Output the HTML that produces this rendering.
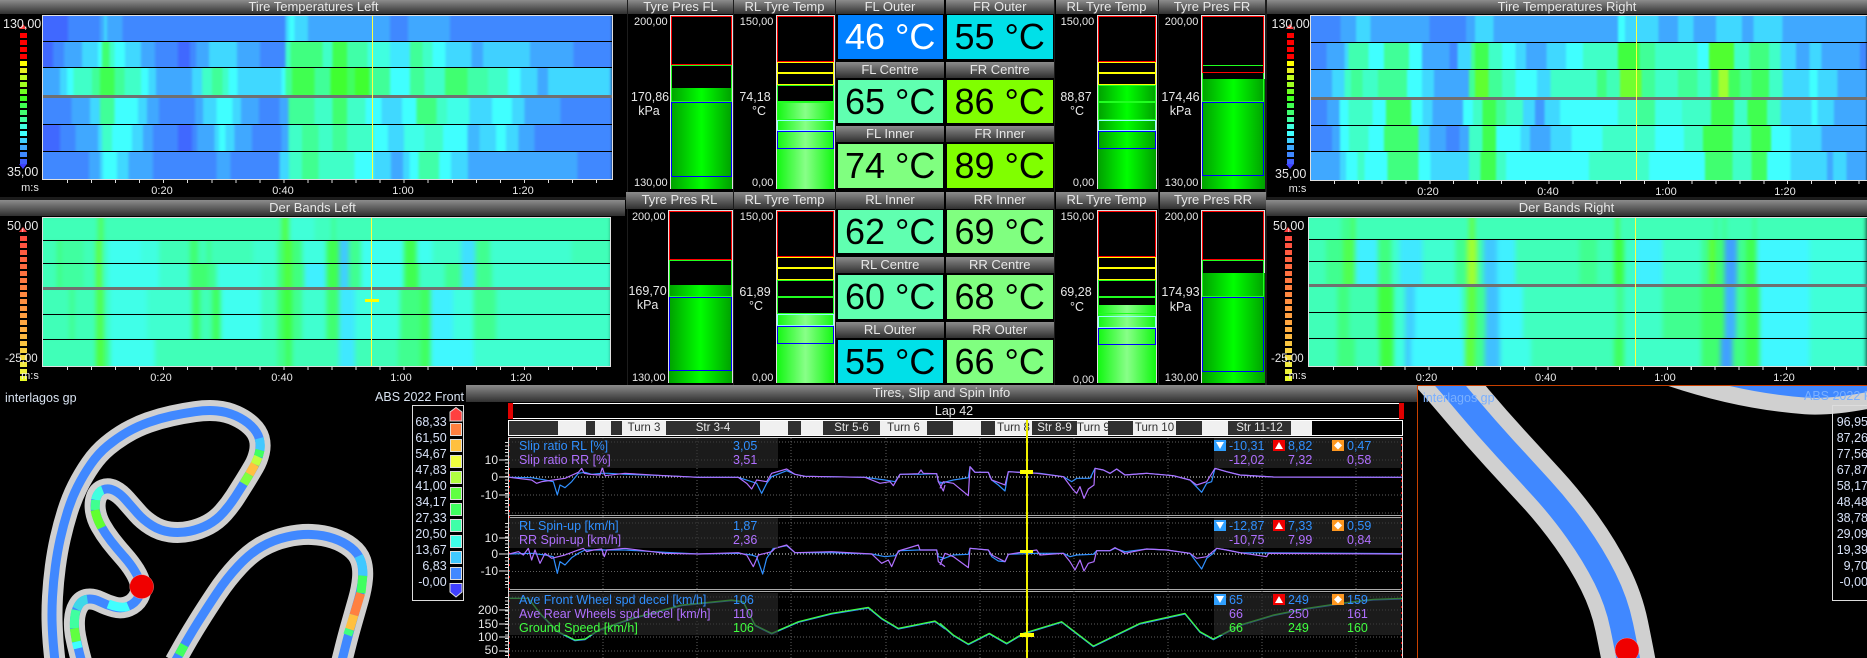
<!DOCTYPE html>
<html><head><meta charset="utf-8"><title>Telemetry</title>
<style>
html,body{margin:0;padding:0;background:#000;width:1867px;height:658px;overflow:hidden}
body{position:relative;font-family:"Liberation Sans",sans-serif;color:#e8e8e8;font-size:12.5px}
div,span{position:absolute;box-sizing:border-box;white-space:nowrap}
.tb{background:linear-gradient(180deg,#8c8c8c,#303030);text-align:center;color:#e8e8e8;font-size:13px;line-height:14px}
.v{font-size:36px;line-height:44px;text-align:center;color:#000;letter-spacing:0}
.r{width:60px;text-align:right;line-height:16px;font-size:11px}
.c{width:80px;text-align:center;line-height:16px}
.x{width:40px;text-align:center;line-height:16px;font-size:11px}
.p{background:linear-gradient(90deg,#00a000,#00ff00 50%,#00a000)}
.q{background:linear-gradient(90deg,#12f812,#88ff88 50%,#12f812)}
.gf{border:1px solid #e0e0e0;background:#000}
.bo{border:1px solid #ff0000}.bg{border:1px solid #20ff20}.by{border:1px solid #ffff00}.bc{border:1px solid #90ffff}.bb{border:1px solid #0000ff}
.hl{left:0;top:-12px;height:calc(100% + 24px);width:1500px;transform:scaleX(.40816);transform-origin:0 0;filter:blur(3px)}
.hr{left:0;top:-12px;height:calc(100% + 24px);width:1568px;transform:scaleX(.3871);transform-origin:0 0;filter:blur(3px)}
.d .hl,.d .hr{filter:blur(6px)}
.w{overflow:hidden}
.sep{background:#000;height:1px}
.s1{background:repeating-linear-gradient(180deg,#0000 0 5px,#000 5px 7px),linear-gradient(180deg,#ff0000 0 28px,#ffff00 0 35px,#e8f020 0 42px,#c0ff20 0 49px,#a0ff20 0 56px,#70ff20 0 63px,#40ff20 0 70px,#40ff50 0 77px,#40ff70 0 84px,#40ffa0 0 91px,#40ffe0 0 98px,#40ffff 0 105px,#40d0ff 0 112px,#40a8ff 0 119px,#4088ff 0 126px,#4060ff 0 133px);width:6.5px;height:131px}
.s2{background:repeating-linear-gradient(180deg,#0000 0 5px,#000 5px 7px),linear-gradient(180deg,#ff4a40,#ff8040 35%,#ffb040 65%,#f0f040 90%,#e8ff20);width:6.5px;height:147px}
.tk{height:3px;background:repeating-linear-gradient(90deg,#ddd 0 1px,#0000 1px 24.05px)}
.ya{background:repeating-linear-gradient(180deg,#ddd 0 1px,#0000 1px 3.4px);width:3px;left:505px}
.ip{background:rgba(44,44,44,.62)}
.sb{top:421px;height:14px;text-align:center;line-height:14px;font-size:11.5px;overflow:hidden}
.dk{background:#303030;color:#e8e8e8}.lt{background:#f0f0f0;color:#303030}
.bl{color:#3090ff}.pu{color:#b070ff}.gr{color:#40ff40}
.i{width:12px;height:11px;line-height:16px}
.lg{width:40px;text-align:right;color:#d8e2f8;line-height:16px;font-size:12.5px}
.sw{left:449.7px;width:12px;height:13px;border:1px solid #ddd}
</style></head><body>

<!-- background separators -->
<div style="left:627px;top:0;width:1px;height:385px;background:#1c1c1c"></div>
<div style="left:733px;top:0;width:1px;height:385px;background:#1c1c1c"></div>
<div style="left:835px;top:0;width:1px;height:385px;background:#1c1c1c"></div>
<div style="left:1054px;top:0;width:1px;height:385px;background:#1c1c1c"></div>
<div style="left:1158px;top:0;width:1px;height:385px;background:#1c1c1c"></div>
<div style="left:1265px;top:0;width:2px;height:385px;background:#1c1c1c"></div>
<div style="left:0;top:197px;width:627px;height:3px;background:#1c1c1c"></div>
<div style="left:1267px;top:197px;width:600px;height:3px;background:#1c1c1c"></div>

<!-- LEFT TOP HEAT -->
<div class="tb" style="left:0;top:0;width:627px;height:14px">Tire Temperatures Left</div>
<div class="gf" style="left:42px;top:15px;width:571px;height:165px"></div>
<div class="a w" style="left:43px;top:16px;width:569px;height:163px">
<div class="w" style="left:0;top:0;width:569px;height:26px"><div class="hl" style="left:-43px;background:linear-gradient(90deg,#4068ff 0 166px,#4088ff 0 245px,#40a8ff 0 255px,#40d8ff 0 262px,#40a8ff 0 300px,#4088ff 0 700px,#40d8ff 0 708px,#40ffff 0 722px,#40d8ff 0 755px,#40a8ff 0 955px,#4088ff 0 1000px,#40a8ff 0 1102px,#4088ff 0 1500px)"></div></div>
<div class="w" style="left:0;top:26px;width:569px;height:26px"><div class="hl" style="left:-43px;background:linear-gradient(90deg,#4068ff 0 130px,#4088ff 0 157px,#40a8ff 0 201px,#40d8ff 0 240px,#40ffff 0 250px,#40ff70 0 268px,#40ffc8 0 280px,#40ffff 0 306px,#40d8ff 0 346px,#40a8ff 0 380px,#4088ff 0 436px,#4068ff 0 465px,#4088ff 0 480px,#40a8ff 0 512px,#40d8ff 0 581px,#40a8ff 0 637px,#4088ff 0 700px,#40ffc8 0 712px,#40ff80 0 790px,#40ffc8 0 815px,#40ff50 0 850px,#40ffa8 0 900px,#40ffe0 0 955px,#40e8ff 0 1005px,#40ff98 0 1035px,#40ffc8 0 1060px,#40ffff 0 1092px,#40d8ff 0 1155px,#40a8ff 0 1183px,#40d0ff 0 1298px,#40a8ff 0 1405px,#4088ff 0 1500px)"></div></div>
<div class="w" style="left:0;top:52px;width:569px;height:28px"><div class="hl" style="left:-43px;background:linear-gradient(90deg,#40a8ff 0 147px,#40d8ff 0 164px,#40ffff 0 180px,#40ffc8 0 225px,#40ff98 0 245px,#40ff50 0 280px,#40ff98 0 305px,#40ffc8 0 345px,#40ffff 0 364px,#40d8ff 0 382px,#40a8ff 0 470px,#40d8ff 0 495px,#40ffc8 0 520px,#40ff98 0 545px,#40ffc8 0 560px,#40ffff 0 582px,#40d8ff 0 690px,#40ffff 0 700px,#40ff98 0 715px,#40ff50 0 770px,#40ff98 0 810px,#40ff30 0 850px,#40ff60 0 870px,#40ff30 0 905px,#40ff98 0 955px,#40ffff 0 1005px,#40ff98 0 1040px,#40ffc8 0 1090px,#40ff70 0 1145px,#40ffa8 0 1195px,#40ffc8 0 1245px,#40ffff 0 1275px,#40d8ff 0 1317px,#40a8ff 0 1343px,#40d8ff 0 1495px,#40a8ff 0 1500px)"></div></div>
<div class="w" style="left:0;top:81px;width:569px;height:27px"><div class="hl" style="left:-43px;background:linear-gradient(90deg,#4088ff 0 175px,#40a8ff 0 220px,#40d8ff 0 245px,#40ff98 0 280px,#40ffff 0 338px,#40d8ff 0 360px,#40a8ff 0 390px,#4088ff 0 478px,#40a8ff 0 497px,#40d8ff 0 530px,#40ffff 0 570px,#40d8ff 0 590px,#40a8ff 0 635px,#4088ff 0 685px,#40a8ff 0 707px,#40ff98 0 770px,#40ffc8 0 815px,#40ff70 0 850px,#40ffc8 0 895px,#40ffff 0 935px,#40d8ff 0 985px,#40ffff 0 1020px,#40ff80 0 1070px,#40ffc8 0 1095px,#40ffe8 0 1150px,#40d8ff 0 1205px,#40ffff 0 1255px,#40d8ff 0 1285px,#40a8ff 0 1373px,#4088ff 0 1500px)"></div></div>
<div class="w" style="left:0;top:109px;width:569px;height:27px"><div class="hl" style="left:-43px;background:linear-gradient(90deg,#4068ff 0 147px,#4088ff 0 185px,#40a8ff 0 240px,#40d8ff 0 250px,#40ffc8 0 275px,#40ffff 0 323px,#40d8ff 0 350px,#40a8ff 0 375px,#4088ff 0 436px,#4068ff 0 470px,#4088ff 0 483px,#40a8ff 0 525px,#40d8ff 0 537px,#40ffff 0 553px,#40d8ff 0 575px,#40a8ff 0 617px,#4088ff 0 690px,#40a8ff 0 707px,#40ffc8 0 740px,#40ff98 0 780px,#40ffc8 0 815px,#40ff98 0 850px,#40ffc8 0 915px,#40ffff 0 950px,#40d8ff 0 990px,#40ffe8 0 1040px,#40ffc8 0 1085px,#40ffff 0 1145px,#40b8ff 0 1175px,#40d8ff 0 1215px,#40ffff 0 1240px,#40d8ff 0 1270px,#40a8ff 0 1310px,#4088ff 0 1500px)"></div></div>
<div class="w" style="left:0;top:136px;width:569px;height:27px"><div class="hl" style="left:-43px;background:linear-gradient(90deg,#4088ff 0 218px,#40a8ff 0 245px,#40d8ff 0 252px,#40ffff 0 287px,#40d8ff 0 315px,#40a8ff 0 375px,#4088ff 0 530px,#40a8ff 0 565px,#4088ff 0 685px,#40d8ff 0 708px,#40ffc8 0 740px,#40ff90 0 780px,#40ffc8 0 868px,#40ffff 0 915px,#40d8ff 0 958px,#40a8ff 0 987px,#40d8ff 0 1003px,#40ffff 0 1025px,#40ffa8 0 1075px,#40ffff 0 1105px,#40d8ff 0 1147px,#40a8ff 0 1415px,#4088ff 0 1500px)"></div></div>
</div>
<div class="sep" style="left:43px;top:41px;width:569px"></div>
<div class="sep" style="left:43px;top:67px;width:569px"></div>
<div style="left:43px;top:95px;width:569px;height:3px;background:#707070"></div>
<div class="sep" style="left:43px;top:124px;width:569px"></div>
<div class="sep" style="left:43px;top:151px;width:569px"></div>
<div style="left:372px;top:16px;width:1px;height:163px;background:#ffff40"></div>
<div class="tk" style="left:67px;top:180px;width:545px"></div>
<span class="x" style="left:142px;top:183px">0:20</span><span class="x" style="left:263px;top:183px">0:40</span><span class="x" style="left:383px;top:183px">1:00</span><span class="x" style="left:503px;top:183px">1:20</span>
<span class="x" style="left:10px;top:180px">m:s</span>
<div class="s1" style="left:20px;top:33px"></div>
<svg style="position:absolute;left:18px;top:24px" width="10" height="5"><polygon points="5,0 9,5 1,5" fill="#ff4040"/></svg>
<svg style="position:absolute;left:18px;top:164px" width="10" height="5"><polygon points="1,0 9,0 5,5" fill="#4040ff"/></svg>
<span style="left:3px;top:16px;line-height:16px">130,00</span>
<span style="left:7px;top:164px;line-height:16px">35,00</span>

<!-- LEFT BOTTOM HEAT -->
<div class="tb" style="left:0;top:200px;width:625px;height:16px;line-height:15px">Der Bands Left</div>
<div class="gf" style="left:42px;top:217px;width:569px;height:150px"></div>
<div class="a w d" style="left:43px;top:218px;width:567px;height:148px">
<div class="w" style="left:0;top:0;width:567px;height:22px"><div class="hl" style="left:-43px;background:linear-gradient(90deg,#40ffb8 0 238px,#40ff90 0 244px,#60ff40 0 250px,#40ff90 0 256px,#40ffb8 0 690px,#50ff50 0 708px,#40ffd8 0 770px,#40ffc0 0 815px,#40ff70 0 819px,#40ffb8 0 1500px)"></div></div>
<div class="w" style="left:0;top:22px;width:567px;height:23px"><div class="hl" style="left:-43px;background:linear-gradient(90deg,#40ffb8 0 140px,#40ff80 0 150px,#40ffa0 0 205px,#40ffb8 0 235px,#60ff40 0 250px,#40ffc8 0 265px,#40fff0 0 345px,#40ffe0 0 390px,#40ffb8 0 465px,#40ff70 0 485px,#40ffb8 0 508px,#40ff80 0 516px,#40ffb8 0 620px,#40ffd0 0 680px,#40ff80 0 695px,#50ff40 0 715px,#40ff80 0 740px,#40ffe0 0 800px,#40ff50 0 830px,#40c8ff 0 855px,#40ff90 0 885px,#40fff0 0 990px,#40ff50 0 1020px,#40fff0 0 1060px,#40ffc8 0 1130px,#40e0ff 0 1165px,#40ff90 0 1200px,#40ffd0 0 1400px,#40ffb8 0 1500px)"></div></div>
<div class="w" style="left:0;top:45px;width:567px;height:25px"><div class="hl" style="left:-43px;background:linear-gradient(90deg,#40ffb8 0 140px,#40ff80 0 150px,#40ffa0 0 205px,#40ffb8 0 235px,#60ff40 0 250px,#40ffc8 0 265px,#40fff0 0 390px,#40ffd0 0 465px,#40ff70 0 510px,#40ff90 0 530px,#40ffe8 0 640px,#40ffd0 0 680px,#40ff80 0 695px,#50ff40 0 715px,#40ff80 0 745px,#40f0ff 0 800px,#40ff50 0 830px,#40d0ff 0 855px,#40ff90 0 885px,#40fff0 0 990px,#40ff50 0 1025px,#40ffc8 0 1090px,#40ff90 0 1130px,#40e0ff 0 1165px,#40ff90 0 1205px,#40ffd0 0 1500px)"></div></div>
<div class="w" style="left:0;top:70px;width:567px;height:26px"><div class="hl" style="left:-43px;background:linear-gradient(90deg,#40ffb8 0 170px,#40ff90 0 182px,#40ffb8 0 235px,#50ff50 0 255px,#40ffc8 0 270px,#40ffe8 0 360px,#40ffd0 0 470px,#40ff60 0 490px,#40ffb8 0 520px,#40ff60 0 540px,#40fff0 0 640px,#40ffc0 0 680px,#40ff70 0 695px,#40ff40 0 715px,#40ff90 0 740px,#40ffd0 0 800px,#40ff70 0 830px,#40e8ff 0 870px,#40ffe0 0 980px,#40ff80 0 1030px,#40ff60 0 1055px,#40f0ff 0 1110px,#40ffe0 0 1160px,#40ff90 0 1215px,#40ffc8 0 1500px)"></div></div>
<div class="w" style="left:0;top:96px;width:567px;height:25px"><div class="hl" style="left:-43px;background:linear-gradient(90deg,#40ffb8 0 170px,#40ff90 0 182px,#40ffb8 0 235px,#50ff50 0 255px,#40ffc8 0 270px,#40ffe8 0 360px,#40ffd0 0 470px,#40ff60 0 490px,#40ffb8 0 520px,#40ff60 0 540px,#40fff0 0 640px,#40ffc0 0 680px,#40ff70 0 695px,#40ff40 0 715px,#40ff90 0 740px,#40ffd0 0 800px,#40ff70 0 830px,#40e8ff 0 870px,#40ffe0 0 980px,#40ff80 0 1030px,#40ff60 0 1055px,#40f0ff 0 1110px,#40ffe0 0 1160px,#40ff90 0 1215px,#40ffc8 0 1500px)"></div></div>
<div class="w" style="left:0;top:121px;width:567px;height:27px"><div class="hl" style="left:-43px;background:linear-gradient(90deg,#40ffb8 0 235px,#50ff40 0 255px,#40ff90 0 270px,#40fff0 0 380px,#40ffb8 0 680px,#40ff90 0 700px,#40ff60 0 715px,#40ffb8 0 830px,#40e8ff 0 870px,#40ffb8 0 975px,#40ff90 0 1030px,#40ff60 0 1055px,#40f8ff 0 1160px,#40ffd0 0 1500px)"></div></div>
</div>
<div class="sep" style="left:43px;top:240px;width:567px"></div>
<div class="sep" style="left:43px;top:263px;width:567px"></div>
<div style="left:43px;top:287px;width:567px;height:3px;background:#707070"></div>
<div class="sep" style="left:43px;top:314px;width:567px"></div>
<div class="sep" style="left:43px;top:339px;width:567px"></div>
<div style="left:371px;top:218px;width:1px;height:148px;background:#ffff40"></div>
<div style="left:364.5px;top:299px;width:14px;height:3px;background:#ffff00"></div>
<div class="tk" style="left:66.5px;top:367px;width:543px"></div>
<span class="x" style="left:141px;top:370px">0:20</span><span class="x" style="left:262px;top:370px">0:40</span><span class="x" style="left:381px;top:370px">1:00</span><span class="x" style="left:501px;top:370px">1:20</span>
<div class="s2" style="left:20px;top:235.5px"></div>
<svg style="position:absolute;left:18px;top:227px" width="10" height="5"><polygon points="5,0 9,5 1,5" fill="#ff4040"/></svg>
<span style="left:7px;top:218px;line-height:16px">50,00</span>
<span style="left:5px;top:351px;line-height:16px;font-size:11.5px">-25,00</span>
<span class="x" style="left:10px;top:368px">m:s</span>

<!-- RIGHT TOP HEAT -->
<div class="tb" style="left:1267px;top:0;width:600px;height:14px">Tire Temperatures Right</div>
<div class="gf" style="left:1310px;top:15px;width:570px;height:166px"></div>
<div class="a w" style="left:1311px;top:16px;width:556px;height:164px">
<div class="w" style="left:0;top:0;width:556px;height:26px"><div class="hr" style="left:-51px;background:linear-gradient(90deg,#4088ff 0 208px,#40a8ff 0 248px,#40d8ff 0 285px,#40a8ff 0 438px,#4088ff 0 532px,#40a8ff 0 555px,#40d8ff 0 603px,#40a8ff 0 925px,#40ffff 0 943px,#40d8ff 0 1030px,#40a8ff 0 1080px,#40d8ff 0 1120px,#40a8ff 0 1178px,#40d8ff 0 1245px,#40a8ff 0 1275px,#40d8ff 0 1350px,#40a8ff 0 1568px)"></div></div>
<div class="w" style="left:0;top:26px;width:556px;height:27px"><div class="hr" style="left:-51px;background:linear-gradient(90deg,#4088ff 0 172px,#40a8ff 0 218px,#40d8ff 0 228px,#40ffb0 0 280px,#40ffff 0 320px,#40ff98 0 385px,#40ffff 0 418px,#40a8ff 0 490px,#4088ff 0 510px,#40d8ff 0 545px,#40ff98 0 555px,#40ff50 0 590px,#40ffc8 0 625px,#40ffff 0 660px,#40d8ff 0 687px,#40a8ff 0 740px,#40d8ff 0 790px,#40ffff 0 835px,#40ffc8 0 925px,#40ff40 0 980px,#40ff98 0 1020px,#40ffc8 0 1130px,#40ffff 0 1160px,#50ff30 0 1225px,#40ffc8 0 1265px,#40ff80 0 1315px,#40ffc8 0 1345px,#40d8ff 0 1385px,#40a8ff 0 1420px,#40d8ff 0 1450px,#40a8ff 0 1550px,#4088ff 0 1568px)"></div></div>
<div class="w" style="left:0;top:53px;width:556px;height:28px"><div class="hr" style="left:-51px;background:linear-gradient(90deg,#40a8ff 0 186px,#40d8ff 0 218px,#40ffc8 0 235px,#40ff98 0 265px,#40ffc8 0 305px,#40ff98 0 380px,#40ffff 0 418px,#40d8ff 0 450px,#40a8ff 0 540px,#40ff98 0 555px,#60ff30 0 590px,#40ff98 0 625px,#40ffc8 0 660px,#40ffff 0 715px,#40d8ff 0 750px,#40ffc8 0 870px,#40ff80 0 895px,#40ffb8 0 930px,#70ff30 0 985px,#40ff98 0 1020px,#40ffc8 0 1080px,#40ff98 0 1130px,#40ffc8 0 1165px,#40ff60 0 1185px,#a0ff30 0 1210px,#40ff60 0 1240px,#40ff98 0 1270px,#40ff60 0 1315px,#40ffc8 0 1350px,#40d8ff 0 1420px,#40ffff 0 1440px,#40d8ff 0 1492px,#40a8ff 0 1568px)"></div></div>
<div class="w" style="left:0;top:82px;width:556px;height:27px"><div class="hr" style="left:-51px;background:linear-gradient(90deg,#4088ff 0 173px,#40a8ff 0 205px,#40ffff 0 228px,#40ffc8 0 290px,#40ffff 0 325px,#40ff60 0 390px,#40ffff 0 420px,#40d8ff 0 445px,#40a8ff 0 525px,#40ffff 0 550px,#40ffc8 0 575px,#40ff50 0 610px,#40ff98 0 635px,#40ffc8 0 680px,#40d8ff 0 710px,#4098ff 0 735px,#40d8ff 0 775px,#40ffff 0 925px,#40ffc8 0 975px,#40ff98 0 1020px,#40ffe8 0 1090px,#40ffc8 0 1165px,#40ff50 0 1225px,#40ffc8 0 1260px,#40ff50 0 1310px,#40ffc8 0 1345px,#40d8ff 0 1425px,#40ffff 0 1440px,#40d8ff 0 1483px,#40a8ff 0 1568px)"></div></div>
<div class="w" style="left:0;top:109px;width:556px;height:26px"><div class="hr" style="left:-51px;background:linear-gradient(90deg,#4088ff 0 186px,#40a8ff 0 207px,#40ffff 0 230px,#40ffc8 0 280px,#40ffff 0 320px,#40ff70 0 410px,#40d8ff 0 438px,#40a8ff 0 480px,#4088ff 0 515px,#40a8ff 0 540px,#40ffc8 0 575px,#40ff50 0 610px,#40ffff 0 673px,#40d8ff 0 697px,#40a8ff 0 750px,#40d8ff 0 805px,#40ffff 0 885px,#40ffc8 0 1020px,#40ffff 0 1095px,#40ffc8 0 1145px,#40ff50 0 1220px,#40ffc8 0 1268px,#40ff50 0 1320px,#40ffff 0 1370px,#40d8ff 0 1450px,#40a8ff 0 1568px)"></div></div>
<div class="w" style="left:0;top:135px;width:556px;height:29px"><div class="hr" style="left:-51px;background:linear-gradient(90deg,#40a8ff 0 207px,#40d8ff 0 222px,#40ffff 0 252px,#40ffc8 0 270px,#40ffff 0 330px,#40ff80 0 410px,#40ffff 0 440px,#40d8ff 0 540px,#40ffc8 0 570px,#40ff50 0 610px,#40ffc8 0 635px,#40ffff 0 850px,#40ffc8 0 1005px,#40ffff 0 1150px,#40ff70 0 1220px,#40ffc8 0 1270px,#40ff60 0 1310px,#40ffff 0 1370px,#40d8ff 0 1465px,#40a8ff 0 1480px,#40d8ff 0 1515px,#40a8ff 0 1568px)"></div></div>
</div>
<div class="sep" style="left:1311px;top:42px;width:556px"></div>
<div class="sep" style="left:1311px;top:69px;width:556px"></div>
<div style="left:1311px;top:97px;width:556px;height:3px;background:#707070"></div>
<div class="sep" style="left:1311px;top:125px;width:556px"></div>
<div class="sep" style="left:1311px;top:151px;width:556px"></div>
<div style="left:1636px;top:16px;width:1px;height:164px;background:#ffff40"></div>
<div class="tk" style="left:1334px;top:181px;width:533px;background:repeating-linear-gradient(90deg,#ddd 0 1px,#0000 1px 23.85px)"></div>
<span class="x" style="left:1408px;top:184px">0:20</span><span class="x" style="left:1528px;top:184px">0:40</span><span class="x" style="left:1646px;top:184px">1:00</span><span class="x" style="left:1765px;top:184px">1:20</span>
<span class="x" style="left:1277.5px;top:181px">m:s</span>
<div class="s1" style="left:1287px;top:33px"></div>
<svg style="position:absolute;left:1285px;top:24px" width="10" height="5"><polygon points="5,0 9,5 1,5" fill="#ff4040"/></svg>
<svg style="position:absolute;left:1285px;top:164px" width="10" height="5"><polygon points="1,0 9,0 5,5" fill="#4040ff"/></svg>
<span style="left:1271.5px;top:16px;line-height:16px">130,00</span>
<span style="left:1275px;top:166px;line-height:16px">35,00</span>

<!-- RIGHT BOTTOM HEAT -->
<div class="tb" style="left:1266px;top:200px;width:601px;height:16px;line-height:15px">Der Bands Right</div>
<div class="gf" style="left:1308px;top:217px;width:570px;height:150px"></div>
<div class="a w d" style="left:1309px;top:218px;width:558px;height:148px">
<div class="w" style="left:0;top:0;width:558px;height:21px"><div class="hr" style="left:-49px;background:linear-gradient(90deg,#40ffb8 0 210px,#40ff90 0 238px,#50ff50 0 245px,#40ffb8 0 540px,#60ff50 0 556px,#40ffb8 0 920px,#50ff40 0 928px,#40ffb8 0 1175px,#40ff80 0 1180px,#40ffb8 0 1195px,#40ff90 0 1205px,#40ffb8 0 1275px,#40ff70 0 1280px,#40ffb8 0 1568px)"></div></div>
<div class="w" style="left:0;top:21px;width:558px;height:47px"><div class="hr" style="left:-49px;background:linear-gradient(90deg,#40ffb8 0 170px,#40ff90 0 215px,#50ff50 0 245px,#40f0ff 0 305px,#40ff80 0 340px,#40ffd0 0 360px,#40e8ff 0 420px,#40ffd0 0 505px,#40ff90 0 535px,#a0ff30 0 560px,#40ffb0 0 578px,#40c8ff 0 612px,#40f0ff 0 660px,#40ffb8 0 825px,#40ff90 0 870px,#40ffb8 0 915px,#40ff40 0 940px,#40ffc8 0 970px,#40f0ff 0 1040px,#40ffc8 0 1140px,#40ff90 0 1160px,#60ff30 0 1175px,#40ff70 0 1200px,#40a0ff 0 1232px,#40ff90 0 1255px,#40ff50 0 1282px,#40f8ff 0 1420px,#40ffe0 0 1568px)"></div></div>
<div class="w" style="left:0;top:68px;width:558px;height:52px"><div class="hr" style="left:-49px;background:linear-gradient(90deg,#40ffb8 0 200px,#40ff80 0 230px,#40ffb0 0 305px,#40ff40 0 345px,#40ffd0 0 375px,#40d0ff 0 400px,#40f8ff 0 520px,#40ffb8 0 535px,#60ff40 0 558px,#40ff90 0 582px,#40c0ff 0 618px,#40f8ff 0 680px,#40ffc0 0 920px,#40ff90 0 940px,#40ffc8 0 1040px,#40ff90 0 1140px,#40ff60 0 1200px,#40b0ff 0 1230px,#40ff90 0 1255px,#40ff50 0 1290px,#40f8ff 0 1420px,#40ffd8 0 1568px)"></div></div>
<div class="w" style="left:0;top:120px;width:558px;height:28px"><div class="hr" style="left:-49px;background:linear-gradient(90deg,#40ffb8 0 200px,#40ff80 0 245px,#40ffb8 0 310px,#40ff40 0 345px,#40ffe0 0 375px,#40c8ff 0 390px,#40f8ff 0 530px,#60ff40 0 555px,#40ff90 0 580px,#40c0ff 0 620px,#40ffe8 0 700px,#40ffb8 0 915px,#40ff60 0 940px,#40ffc8 0 1140px,#40ff70 0 1190px,#40a0ff 0 1220px,#40ff80 0 1255px,#40ff50 0 1290px,#40f8ff 0 1420px,#40ffd0 0 1568px)"></div></div>
</div>
<div class="sep" style="left:1309px;top:239px;width:558px"></div>
<div class="sep" style="left:1309px;top:261px;width:558px"></div>
<div style="left:1309px;top:284px;width:558px;height:3px;background:#707070"></div>
<div class="sep" style="left:1309px;top:312px;width:558px"></div>
<div class="sep" style="left:1309px;top:338px;width:558px"></div>
<div style="left:1635px;top:218px;width:1px;height:148px;background:#ffff40"></div>
<div class="tk" style="left:1332.5px;top:367px;width:534px;background:repeating-linear-gradient(90deg,#ddd 0 1px,#0000 1px 23.85px)"></div>
<span class="x" style="left:1406.5px;top:370px">0:20</span><span class="x" style="left:1525.7px;top:370px">0:40</span><span class="x" style="left:1645px;top:370px">1:00</span><span class="x" style="left:1764px;top:370px">1:20</span>
<div class="s2" style="left:1285px;top:235.5px"></div>
<svg style="position:absolute;left:1283px;top:227px" width="10" height="5"><polygon points="5,0 9,5 1,5" fill="#ff4040"/></svg>
<span style="left:1273px;top:218px;line-height:16px">50,00</span>
<span style="left:1271px;top:351px;line-height:16px;font-size:11.5px">-25,00</span>
<span class="x" style="left:1277.5px;top:368px">m:s</span>

<!-- GAUGES TITLES TOP -->
<div class="tb" style="left:628px;top:0;width:105px;height:14px">Tyre Pres FL</div>
<div class="tb" style="left:734px;top:0;width:101px;height:14px">RL Tyre Temp</div>
<div class="tb" style="left:836px;top:0;width:108px;height:14px">FL Outer</div>
<div class="tb" style="left:945.5px;top:0;width:108.5px;height:14px">FR Outer</div>
<div class="tb" style="left:1055.5px;top:0;width:102px;height:14px">RL Tyre Temp</div>
<div class="tb" style="left:1159px;top:0;width:106px;height:14px">Tyre Pres FR</div>

<!-- gauge FL pres -->
<div class="gf" style="left:670px;top:15px;width:63px;height:174px"></div>
<div class="p" style="left:671px;top:88px;width:61px;height:101px"></div>
<div class="bo" style="left:671px;top:16px;width:61px;height:49px"></div>
<div class="bg" style="left:671px;top:65px;width:61px;height:37px"></div>
<div class="bb" style="left:671px;top:102px;width:61px;height:74.5px"></div>
<!-- gauge FL temp -->
<div class="gf" style="left:776px;top:15px;width:58.5px;height:174px"></div>
<div class="q" style="left:777px;top:102px;width:57px;height:87px"></div>
<div class="bo" style="left:777px;top:16px;width:57px;height:46px"></div>
<div class="by" style="left:777px;top:62px;width:57px;height:11px"></div>
<div class="by" style="left:777px;top:73px;width:57px;height:12px"></div>
<div class="bg" style="left:777px;top:85px;width:57px;height:17px"></div>
<div class="bg" style="left:777px;top:102px;width:57px;height:18px"></div>
<div class="bc" style="left:777px;top:120px;width:57px;height:11px"></div>
<div class="bb" style="left:777px;top:131px;width:57px;height:17.5px"></div>
<!-- gauge FR temp -->
<div class="gf" style="left:1097px;top:15px;width:60px;height:174px"></div>
<div class="p" style="left:1098px;top:85px;width:58px;height:104px"></div>
<div class="bo" style="left:1098px;top:16px;width:58px;height:46px"></div>
<div class="by" style="left:1098px;top:62px;width:58px;height:11px"></div>
<div class="by" style="left:1098px;top:73px;width:58px;height:12px"></div>
<div class="bg" style="left:1098px;top:85px;width:58px;height:17px"></div>
<div class="bg" style="left:1098px;top:102px;width:58px;height:18px"></div>
<div class="bc" style="left:1098px;top:120px;width:58px;height:11px"></div>
<div class="bb" style="left:1098px;top:131px;width:58px;height:17.5px"></div>
<!-- gauge FR pres -->
<div class="gf" style="left:1201px;top:15px;width:64px;height:174px"></div>
<div class="p" style="left:1202px;top:79px;width:63px;height:110px"></div>
<div class="bg" style="left:1202px;top:65px;width:62px;height:37px"></div>
<div class="bo" style="left:1202px;top:16px;width:62px;height:56.5px"></div>
<div class="bb" style="left:1202px;top:102px;width:62px;height:74px"></div>

<span class="r" style="left:607.7px;top:14px">200,00</span><span class="c" style="left:610px;top:89px">170,86</span><span class="c" style="left:609px;top:103px">kPa</span><span class="r" style="left:607.7px;top:175px">130,00</span>
<span class="r" style="left:713.4px;top:14px">150,00</span><span class="c" style="left:715px;top:89px">74,18</span><span class="c" style="left:719px;top:103px">°C</span><span class="r" style="left:713.4px;top:175px">0,00</span>
<span class="r" style="left:1034.3px;top:14px">150,00</span><span class="c" style="left:1036px;top:89px">88,87</span><span class="c" style="left:1037px;top:103px">°C</span><span class="r" style="left:1034.3px;top:175px">0,00</span>
<span class="r" style="left:1138.4px;top:14px">200,00</span><span class="c" style="left:1140.5px;top:89px">174,46</span><span class="c" style="left:1140.5px;top:103px">kPa</span><span class="r" style="left:1138.4px;top:175px">130,00</span>

<!-- CENTER CELLS TOP -->
<div class="v" style="left:837.7px;top:14.7px;width:105px;height:44px;background:#0080ff;color:#fff">46 °C</div>
<div class="v" style="left:946.7px;top:14.7px;width:106px;height:44px;background:#00e0e8">55 °C</div>
<div class="tb" style="left:836px;top:62px;width:108px;height:16px;line-height:16px">FL Centre</div>
<div class="tb" style="left:945.5px;top:62px;width:108.5px;height:16px;line-height:16px">FR Centre</div>
<div class="v" style="left:837.7px;top:79.7px;width:105px;height:43px;background:#60ffb0">65 °C</div>
<div class="v" style="left:946.7px;top:79.7px;width:106px;height:43px;background:#80ff00">86 °C</div>
<div class="tb" style="left:836px;top:126px;width:108px;height:16px;line-height:16px">FL Inner</div>
<div class="tb" style="left:945.5px;top:126px;width:108.5px;height:16px;line-height:16px">FR Inner</div>
<div class="v" style="left:837.7px;top:143.7px;width:105px;height:44.6px;background:#80ff80">74 °C</div>
<div class="v" style="left:946.7px;top:143.7px;width:106px;height:44.6px;background:#80ff00">89 °C</div>

<!-- GAUGES TITLES BOTTOM -->
<div class="tb" style="left:626px;top:192px;width:107px;height:17px;line-height:16px">Tyre Pres RL</div>
<div class="tb" style="left:734px;top:192px;width:101px;height:17px;line-height:16px">RL Tyre Temp</div>
<div class="tb" style="left:836px;top:192px;width:108px;height:17px;line-height:16px">RL Inner</div>
<div class="tb" style="left:945.5px;top:192px;width:108.5px;height:17px;line-height:16px">RR Inner</div>
<div class="tb" style="left:1055.5px;top:192px;width:102px;height:17px;line-height:16px">RL Tyre Temp</div>
<div class="tb" style="left:1160px;top:192px;width:106px;height:17px;line-height:16px">Tyre Pres RR</div>

<!-- gauges bottom -->
<div class="gf" style="left:668px;top:210px;width:65px;height:173px"></div>
<div class="p" style="left:669px;top:285px;width:63px;height:98px"></div>
<div class="bo" style="left:669px;top:211px;width:63px;height:49px"></div>
<div class="bg" style="left:669px;top:260px;width:63px;height:37px"></div>
<div class="bb" style="left:669px;top:297px;width:63px;height:73.5px"></div>

<div class="gf" style="left:776px;top:210px;width:58.5px;height:173px"></div>
<div class="q" style="left:777px;top:313px;width:57px;height:70px"></div>
<div class="bo" style="left:777px;top:211px;width:57px;height:46px"></div>
<div class="by" style="left:777px;top:257px;width:57px;height:11px"></div>
<div class="by" style="left:777px;top:268px;width:57px;height:12px"></div>
<div class="bg" style="left:777px;top:280px;width:57px;height:17px"></div>
<div class="bg" style="left:777px;top:297px;width:57px;height:17px"></div>
<div class="bc" style="left:777px;top:314px;width:57px;height:12px"></div>
<div class="bb" style="left:777px;top:326px;width:57px;height:17.5px"></div>

<div class="gf" style="left:1097px;top:210px;width:60px;height:173px"></div>
<div class="q" style="left:1098px;top:305px;width:58px;height:78px"></div>
<div class="bo" style="left:1098px;top:211px;width:58px;height:46px"></div>
<div class="by" style="left:1098px;top:257px;width:58px;height:11px"></div>
<div class="by" style="left:1098px;top:268px;width:58px;height:12px"></div>
<div class="bg" style="left:1098px;top:280px;width:58px;height:17px"></div>
<div class="bg" style="left:1098px;top:297px;width:58px;height:17px"></div>
<div class="bc" style="left:1098px;top:316px;width:58px;height:12px"></div>
<div class="bb" style="left:1098px;top:328px;width:58px;height:17px"></div>

<div class="gf" style="left:1201px;top:210px;width:64px;height:173px"></div>
<div class="p" style="left:1202px;top:272.7px;width:63px;height:110.3px"></div>
<div class="bo" style="left:1202px;top:211px;width:62px;height:49px"></div>
<div class="bg" style="left:1202px;top:260px;width:62px;height:37px"></div>
<div class="bb" style="left:1202px;top:297px;width:62px;height:74.5px"></div>

<span class="r" style="left:605.6px;top:209px">200,00</span><span class="c" style="left:607.6px;top:282.7px">169,70</span><span class="c" style="left:607.6px;top:297px">kPa</span><span class="r" style="left:605.6px;top:369.7px">130,00</span>
<span class="r" style="left:713.4px;top:209px">150,00</span><span class="c" style="left:715px;top:283.7px">61,89</span><span class="c" style="left:716px;top:297.7px">°C</span><span class="r" style="left:713.4px;top:370px">0,00</span>
<span class="r" style="left:1034.3px;top:209px">150,00</span><span class="c" style="left:1036px;top:284px">69,28</span><span class="c" style="left:1037px;top:298.7px">°C</span><span class="r" style="left:1034.3px;top:372px">0,00</span>
<span class="r" style="left:1138.4px;top:209px">200,00</span><span class="c" style="left:1140.5px;top:284px">174,93</span><span class="c" style="left:1140.5px;top:298.7px">kPa</span><span class="r" style="left:1138.4px;top:370px">130,00</span>

<!-- CENTER CELLS BOTTOM -->
<div class="v" style="left:837.7px;top:209.7px;width:105px;height:43.3px;background:#60ffb0">62 °C</div>
<div class="v" style="left:946.7px;top:209.7px;width:106px;height:43.3px;background:#80ff80">69 °C</div>
<div class="tb" style="left:836px;top:256.7px;width:108px;height:16.6px;line-height:16px">RL Centre</div>
<div class="tb" style="left:945.5px;top:256.7px;width:108.5px;height:16.6px;line-height:16px">RR Centre</div>
<div class="v" style="left:837.7px;top:274.7px;width:105px;height:44px;background:#60ffb0">60 °C</div>
<div class="v" style="left:946.7px;top:274.7px;width:106px;height:44px;background:#80ff80">68 °C</div>
<div class="tb" style="left:836px;top:322px;width:108px;height:16px;line-height:16px">RL Outer</div>
<div class="tb" style="left:945.5px;top:322px;width:108.5px;height:16px;line-height:16px">RR Outer</div>
<div class="v" style="left:837.7px;top:339.7px;width:105px;height:43.6px;background:#00e0e8">55 °C</div>
<div class="v" style="left:946.7px;top:339.7px;width:106px;height:43.6px;background:#80ff80">66 °C</div>

<!-- LEFT MAP -->
<div style="left:0;top:385px;width:466px;height:273px;background:#000;overflow:hidden">
<svg style="position:absolute;left:0;top:0" width="470" height="273" viewBox="0 0 1410 819" fill="none" stroke-linejoin="round">
<g stroke="#d0d0d0" stroke-width="63">
<path id="ta" d="M165,830 L161.5,795 Q158,760 156.5,720 Q155,680 157.5,635 Q160,590 166,545 Q172,500 181,460 Q190,420 202.5,380 Q215,340 232.5,305 Q250,270 272.5,237.5 Q295,205 322.5,182.5 Q350,160 380,142.5 Q410,125 445,112.5 Q480,100 515,92.5 Q550,85 585,80 Q620,75 650,77.5 Q680,80 707.5,92.5 Q735,105 753.5,122.5 Q772,140 777.5,160 Q783,180 778,202.5 Q773,225 761.5,245 Q750,265 736,287.5 Q722,310 706,335 Q690,360 670,382.5 Q650,405 625,418.5 Q600,432 570,438.5 Q540,445 510,441 Q480,437 455,421 Q430,405 412.5,385 Q395,365 377.5,345 Q360,325 342.5,316.5 Q325,308 310,314 Q295,320 289,337.5 Q283,355 286.5,377.5 Q290,400 302.5,422.5 Q315,445 332.5,467.5 Q350,490 370,512.5 Q390,535 404,557.5 Q418,580 421.5,600 Q425,620 415,637.5 Q405,655 385,663.5 Q365,672 342.5,666 Q320,660 300,650 Q280,640 262.5,642.5 Q245,645 235,662.5 Q225,680 223.5,705 Q222,730 227,755 Q232,780 238.5,805 L245,830"/>
<path d="M525,830 L547.5,790 Q570,750 595,710 Q620,670 650,625 Q680,580 715,542.5 Q750,505 785,485 Q820,465 860,456 Q900,447 935,448.5 Q970,450 1000,460 Q1030,470 1052.5,487.5 Q1075,505 1082.5,527.5 Q1090,550 1087.5,580 Q1085,610 1075,645 Q1065,680 1055,715 Q1045,750 1035,790 L1025,830"/>
</g>
<g stroke="#4088ff" stroke-width="27">
<path d="M165,830 L161.5,795 Q158,760 156.5,720 Q155,680 157.5,635 Q160,590 166,545 Q172,500 181,460 Q190,420 202.5,380 Q215,340 232.5,305 Q250,270 272.5,237.5 Q295,205 322.5,182.5 Q350,160 380,142.5 Q410,125 445,112.5 Q480,100 515,92.5 Q550,85 585,80 Q620,75 650,77.5 Q680,80 707.5,92.5 Q735,105 753.5,122.5 Q772,140 777.5,160 Q783,180 778,202.5 Q773,225 761.5,245 Q750,265 736,287.5 Q722,310 706,335 Q690,360 670,382.5 Q650,405 625,418.5 Q600,432 570,438.5 Q540,445 510,441 Q480,437 455,421 Q430,405 412.5,385 Q395,365 377.5,345 Q360,325 342.5,316.5 Q325,308 310,314 Q295,320 289,337.5 Q283,355 286.5,377.5 Q290,400 302.5,422.5 Q315,445 332.5,467.5 Q350,490 370,512.5 Q390,535 404,557.5 Q418,580 421.5,600 Q425,620 415,637.5 Q405,655 385,663.5 Q365,672 342.5,666 Q320,660 300,650 Q280,640 262.5,642.5 Q245,645 235,662.5 Q225,680 223.5,705 Q222,730 227,755 Q232,780 238.5,805 L245,830"/>
<path d="M525,830 L547.5,790 Q570,750 595,710 Q620,670 650,625 Q680,580 715,542.5 Q750,505 785,485 Q820,465 860,456 Q900,447 935,448.5 Q970,450 1000,460 Q1030,470 1052.5,487.5 Q1075,505 1082.5,527.5 Q1090,550 1087.5,580 Q1085,610 1075,645 Q1065,680 1055,715 Q1045,750 1035,790 L1025,830"/>
</g>
<g stroke-width="27">
<path stroke="#40c8ff" d="M777.5,160 Q783,180 780,195"/>
<path stroke="#40ff60" d="M780,195 L775,215"/>
<path stroke="#c0ff40" d="M775,215 L765,238"/>
<path stroke="#ffc040" d="M765,238 L748,268"/>
<path stroke="#80ff40" d="M748,268 L731,296"/>
<path stroke="#40ffe0" d="M308,315 Q295,320 289,337.5 L287,345"/>
<path stroke="#40ff90" d="M287,345 L285,375"/>
<path stroke="#60ff30" d="M285,375 Q290,400 302.5,422.5 L305,428"/>
<path stroke="#40ffff" d="M325,657 Q365,672 385,663.5"/>
<path stroke="#40d8e8" d="M262,642.5 Q245,645 235,662.5 L230,672"/>
<path stroke="#40ffa0" d="M228,675 Q224,695 223.5,705 L223,730"/>
<path stroke="#60ff40" d="M223,730 L227,755 L229,770"/>
<path stroke="#40ffff" d="M229,770 L234,790"/>
<path stroke="#40c8ff" d="M1076,513 L1082.5,527.5 Q1090,550 1088.5,572"/>
<path stroke="#40ff60" d="M1088.5,572 L1083,624"/>
<path stroke="#ff8040" d="M1082,625 L1062,690"/>
<path stroke="#ffc040" d="M1062,690 L1049,733"/>
<path stroke="#40ff80" d="M1049,733 L1043,750"/>
<path stroke="#40ff60" d="M537,810 L553,780"/>
</g>
<circle cx="425" cy="605" r="36" fill="#f00000" stroke="#ffb0b0" stroke-width="1"/>
</svg>
<span style="left:5px;top:5px;line-height:16px;font-size:12.5px;color:#d8e2f0">interlagos gp</span>
<span style="right:2px;top:4px;line-height:16px;font-size:12.5px;color:#d8e2f0">ABS 2022 Front</span>
<div style="left:411.7px;top:20px;width:52px;height:196px;border:1px solid #ddd"></div>
<span class="lg" style="left:406.7px;top:29px">68,33</span><span class="lg" style="left:406.7px;top:45px">61,50</span><span class="lg" style="left:406.7px;top:61px">54,67</span><span class="lg" style="left:406.7px;top:77px">47,83</span><span class="lg" style="left:406.7px;top:93px">41,00</span><span class="lg" style="left:406.7px;top:109px">34,17</span><span class="lg" style="left:406.7px;top:125px">27,33</span><span class="lg" style="left:406.7px;top:141px">20,50</span><span class="lg" style="left:406.7px;top:157px">13,67</span><span class="lg" style="left:406.7px;top:173px">6,83</span><span class="lg" style="left:406.7px;top:189px">-0,00</span>
<svg style="position:absolute;left:449px;top:22px" width="14" height="15"><polygon points="7,0.5 13,5 13,14 1,14 1,5" fill="#ff4040" stroke="#ddd"/></svg>
<div class="sw" style="top:38.3px;background:#ff8040"></div><div class="sw" style="top:54.3px;background:#ffc040"></div><div class="sw" style="top:70.3px;background:#f0ff40"></div><div class="sw" style="top:86.3px;background:#b0ff40"></div><div class="sw" style="top:102.3px;background:#60ff40"></div><div class="sw" style="top:118.3px;background:#40ff60"></div><div class="sw" style="top:134.3px;background:#40ffa8"></div><div class="sw" style="top:150.3px;background:#40ffe8"></div><div class="sw" style="top:166.3px;background:#40c8ff"></div><div class="sw" style="top:182.3px;background:#4088ff"></div>
<svg style="position:absolute;left:449px;top:198px" width="14" height="15"><polygon points="1,0.5 13,0.5 13,9 7,14 1,9" fill="#4040ff" stroke="#ddd"/></svg>
</div>

<!-- CENTER -->
<div style="left:466px;top:385px;width:951px;height:273px;background:#000"></div>
<div class="tb" style="left:466px;top:385px;width:951px;height:17px;line-height:16px">Tires, Slip and Spin Info</div>
<div style="left:508px;top:403px;width:895px;height:15.5px;border:1px solid #fff"></div>
<span class="c" style="left:914px;top:403px">Lap 42</span>
<div style="left:507.5px;top:403px;width:5px;height:16px;background:#e00000"></div>
<div style="left:1399px;top:403px;width:5px;height:16px;background:#e00000"></div>
<div style="left:508px;top:420px;width:895px;height:16px;border:1px solid #fff"></div>
<div class="sb dk" style="left:509.3px;width:48.7px"></div><div class="sb lt" style="left:558px;width:28px"></div><div class="sb dk" style="left:586px;width:9px"></div><div class="sb lt" style="left:595px;width:16px"></div><div class="sb dk" style="left:611px;width:11px"></div>
<div class="sb lt" style="left:622px;width:44px">Turn 3</div><div class="sb dk" style="left:666px;width:94px">Str 3-4</div><div class="sb lt" style="left:760px;width:28px"></div><div class="sb dk" style="left:788px;width:13px"></div><div class="sb lt" style="left:801px;width:22px"></div>
<div class="sb dk" style="left:823px;width:57px">Str 5-6</div><div class="sb lt" style="left:880px;width:47px">Turn 6</div><div class="sb dk" style="left:927px;width:26px"></div><div class="sb lt" style="left:953px;width:28px"></div><div class="sb dk" style="left:981px;width:14px"></div>
<div class="sb lt" style="left:995px;width:37px">Turn 8</div><div class="sb dk" style="left:1032px;width:45px">Str 8-9</div><div class="sb lt" style="left:1077px;width:31px">Turn 9</div><div class="sb dk" style="left:1108px;width:25px"></div><div class="sb lt" style="left:1133px;width:43px">Turn 10</div><div class="sb dk" style="left:1176px;width:26px"></div><div class="sb lt" style="left:1202px;width:26px"></div><div class="sb dk" style="left:1228px;width:63px">Str 11-12</div><div class="sb lt" style="left:1291px;width:21px"></div>

<!-- chart frames -->
<div style="left:508px;top:437px;width:895px;height:1px;background:#ddd"></div>
<div style="left:508px;top:515px;width:895px;height:1px;background:#aaa"></div>
<div style="left:508px;top:517px;width:895px;height:1px;background:#aaa"></div>
<div style="left:508px;top:589px;width:895px;height:1px;background:#aaa"></div>
<div style="left:508px;top:591px;width:895px;height:1px;background:#aaa"></div>
<div style="left:508px;top:437px;width:1px;height:221px;background:#ddd"></div>
<div style="left:1402px;top:437px;width:1px;height:221px;background:#ddd"></div>
<div style="left:509px;top:438px;width:1px;height:220px;background:repeating-linear-gradient(180deg,#e00000 0 2px,#0000 2px 6px)"></div>
<div style="left:1401px;top:438px;width:1px;height:220px;background:repeating-linear-gradient(180deg,#e00000 0 2px,#0000 2px 6px)"></div>

<svg style="position:absolute;left:0;top:0" width="1867" height="658" fill="none">
<g stroke="#606060" stroke-width="1" stroke-dasharray="1 2">
<path d="M603 438V658M697 438V658M791 438V658M886 438V658M980 438V658M1074 438V658M1168 438V658M1262 438V658M1356 438V658"/>
<path d="M509 442H1402M509 460H1402M509 495H1402M509 513H1402M509 523H1402M509 538H1402M509 571.5H1402M509 597H1402M509 610H1402M509 624H1402M509 637H1402M509 651H1402"/>
</g>
<g stroke="#e8e8e8" stroke-width="1" stroke-dasharray="1 2"><path d="M509 477H1402M509 554H1402"/></g>
<g stroke="#e8e8e8" stroke-width="1"><path d="M499 460H508M499 477H508M499 495H508M499 538H508M499 554H508M499 571H508M499 610H508M499 624H508M499 637H508M499 651H508"/></g>
<g stroke-width="3.6" stroke-linejoin="round" transform="translate(465 385) scale(.33333)">
<polyline stroke="#3090ff" points="133,277 200,278 240,285 265,290 277,330 285,300 300,308 320,290 340,265 360,262 380,268 410,265 430,265 480,268 600,272 700,277 820,277 860,290 875,295 890,325 905,295 920,275 965,257 990,268 1020,274 1200,277 1260,285 1290,290 1305,268 1360,268 1415,266 1420,290 1440,295"/>
<polyline stroke="#b070ff" points="133,277 200,285 215,295 230,290 265,285 300,280 340,262 350,250 358,265 375,268 405,270 412,248 420,272 480,265 600,272 700,277 820,277 845,295 860,312 875,285 905,290 920,265 965,252 990,268 1020,274 1200,277 1245,295 1275,290 1285,302 1305,268 1360,266 1368,255 1375,265 1415,266 1420,290 1435,318 1440,300"/>
<polyline stroke="#3090ff" points="133,507 200,505 240,510 265,515 277,565 285,530 300,540 320,518 340,505 360,495 415,495 480,495 600,502 700,507 820,505 860,510 875,515 893,567 905,520 925,490 965,482 990,503 1100,503 1220,507 1260,515 1290,512 1305,497 1360,495 1415,495 1420,515 1440,520"/>
<polyline stroke="#b070ff" points="133,507 160,500 175,510 190,490 200,525 210,495 225,535 240,505 260,520 300,510 340,495 355,490 365,500 385,495 410,492 418,515 425,495 480,490 600,505 700,507 820,503 845,510 865,545 880,510 920,500 930,490 965,480 990,503 1100,500 1220,507 1250,535 1270,525 1280,545 1300,498 1360,480 1365,495 1415,495 1420,530 1440,545"/>
<polyline stroke="#3090ff" points="133,640 190,640 230,692 280,742 330,767 360,764 400,737 500,702 650,662 800,647 835,652 870,722 920,747 1000,712 1100,687 1210,669 1250,702 1300,732 1410,710 1440,732"/>
<polyline stroke="#40ff40" points="133,640 190,640 230,690 280,740 330,765 360,762 400,735 500,700 650,660 800,645 835,650 870,720 920,745 1000,710 1100,685 1210,667 1250,700 1300,730 1410,708 1440,730"/>
</g>
<g stroke-width="3.6" stroke-linejoin="round" transform="translate(940 385) scale(.33333)">
<polyline stroke="#3090ff" points="0,295 40,285 85,278 90,245 105,262 145,262 155,285 175,300 195,318 205,260 240,262 300,265 370,275 395,290 410,280 450,280 465,250 490,255 510,265 530,252 555,270 620,265 700,272 750,285 785,322 800,295 815,290 825,250 860,260 900,270 1000,276 1385,277"/>
<polyline stroke="#b070ff" points="0,310 10,290 40,295 85,332 90,245 105,262 145,262 155,285 195,300 205,260 290,265 370,275 400,315 410,325 420,305 432,340 445,312 462,300 465,250 490,255 510,265 530,252 555,270 620,265 700,272 750,285 770,300 800,290 825,250 860,260 900,270 1000,276 1385,277"/>
<polyline stroke="#3090ff" points="0,525 40,510 85,508 90,490 145,495 155,515 175,528 195,530 205,508 290,505 370,505 390,515 410,510 460,508 470,497 510,497 525,490 555,500 620,492 680,495 750,505 785,552 800,520 820,505 830,490 860,495 900,503 1385,506"/>
<polyline stroke="#b070ff" points="0,540 15,505 40,515 85,548 90,490 145,495 155,510 195,530 205,508 290,495 300,510 370,505 390,530 405,555 420,525 432,558 445,535 462,530 470,497 510,497 525,488 555,505 620,492 680,495 750,505 770,520 800,515 830,490 860,495 900,503 980,515 985,505 1385,507"/>
<polyline stroke="#3090ff" points="0,717 40,752 85,779 148,747 200,777 250,747 365,712 460,785 600,717 735,687 780,742 820,764 900,722 1000,692 1100,672 1200,657 1300,645 1385,642"/>
<polyline stroke="#40ff40" points="0,715 40,750 85,777 148,745 200,775 250,745 365,710 460,783 600,715 735,685 780,740 820,762 900,720 1000,690 1100,670 1200,655 1300,643 1385,640"/>
</g>
</svg>

<div class="ya" style="top:442px;height:72px"></div>
<div class="ya" style="top:523px;height:65px"></div>
<div class="ya" style="top:597px;height:61px"></div>
<span class="r" style="left:438px;top:452px;font-size:12px">10</span><span class="r" style="left:438px;top:469px;font-size:12px">0</span><span class="r" style="left:438px;top:487px;font-size:12px">-10</span>
<span class="r" style="left:438px;top:530px;font-size:12px">10</span><span class="r" style="left:438px;top:546px;font-size:12px">0</span><span class="r" style="left:438px;top:563px;font-size:12px">-10</span>
<span class="r" style="left:438px;top:602px;font-size:12px">200</span><span class="r" style="left:438px;top:616px;font-size:12px">150</span><span class="r" style="left:438px;top:629px;font-size:12px">100</span><span class="r" style="left:438px;top:642px;font-size:12px">50</span>

<!-- info panels -->
<div class="ip" style="left:509px;top:438px;width:269px;height:30px"></div><div class="ip" style="left:1214px;top:438px;width:187px;height:30px"></div>
<div class="ip" style="left:509px;top:518px;width:269px;height:30px"></div><div class="ip" style="left:1214px;top:518px;width:187px;height:30px"></div>
<div class="ip" style="left:509px;top:593px;width:269px;height:42px"></div><div class="ip" style="left:1214px;top:593px;width:187px;height:42px"></div>

<span class="bl" style="left:519px;top:438px;line-height:16px">Slip ratio RL [%]</span><span class="bl" style="left:733px;top:438px;line-height:16px">3,05</span>
<span class="pu" style="left:519px;top:452px;line-height:16px">Slip ratio RR [%]</span><span class="pu" style="left:733px;top:452px;line-height:16px">3,51</span>
<span class="bl" style="left:519px;top:518px;line-height:16px">RL Spin-up [km/h]</span><span class="bl" style="left:733px;top:518px;line-height:16px">1,87</span>
<span class="pu" style="left:519px;top:532px;line-height:16px">RR Spin-up [km/h]</span><span class="pu" style="left:733px;top:532px;line-height:16px">2,36</span>
<span class="bl" style="left:519px;top:592px;line-height:16px">Ave Front Wheel spd decel [km/h]</span><span class="bl" style="left:733px;top:592px;line-height:16px">106</span>
<span class="pu" style="left:519px;top:606px;line-height:16px">Ave Rear Wheels spd decel [km/h]</span><span class="pu" style="left:733px;top:606px;line-height:16px">110</span>
<span class="gr" style="left:519px;top:620px;line-height:16px">Ground Speed [km/h]</span><span class="gr" style="left:733px;top:620px;line-height:16px">106</span>

<svg style="position:absolute;left:1214px;top:440px" width="12" height="11"><rect width="12" height="11" fill="#30a0ff"/><polygon points="2,2 10,2 6,9" fill="#fff"/></svg>
<svg style="position:absolute;left:1273px;top:440px" width="12" height="11"><rect width="12" height="11" fill="#f00000"/><polygon points="6,2 10,9 2,9" fill="#fff"/></svg>
<svg style="position:absolute;left:1332px;top:440px" width="12" height="11"><rect width="12" height="11" fill="#ff9820"/><polygon points="6,1.5 10,5.5 6,9.5 2,5.5" fill="#fff"/></svg>
<svg style="position:absolute;left:1214px;top:520px" width="12" height="11"><rect width="12" height="11" fill="#30a0ff"/><polygon points="2,2 10,2 6,9" fill="#fff"/></svg>
<svg style="position:absolute;left:1273px;top:520px" width="12" height="11"><rect width="12" height="11" fill="#f00000"/><polygon points="6,2 10,9 2,9" fill="#fff"/></svg>
<svg style="position:absolute;left:1332px;top:520px" width="12" height="11"><rect width="12" height="11" fill="#ff9820"/><polygon points="6,1.5 10,5.5 6,9.5 2,5.5" fill="#fff"/></svg>
<svg style="position:absolute;left:1214px;top:594px" width="12" height="11"><rect width="12" height="11" fill="#30a0ff"/><polygon points="2,2 10,2 6,9" fill="#fff"/></svg>
<svg style="position:absolute;left:1273px;top:594px" width="12" height="11"><rect width="12" height="11" fill="#f00000"/><polygon points="6,2 10,9 2,9" fill="#fff"/></svg>
<svg style="position:absolute;left:1332px;top:594px" width="12" height="11"><rect width="12" height="11" fill="#ff9820"/><polygon points="6,1.5 10,5.5 6,9.5 2,5.5" fill="#fff"/></svg>

<span class="bl" style="left:1229px;top:438px;line-height:16px">-10,31</span><span class="bl" style="left:1288px;top:438px;line-height:16px">8,82</span><span class="bl" style="left:1347px;top:438px;line-height:16px">0,47</span>
<span class="pu" style="left:1229px;top:452px;line-height:16px">-12,02</span><span class="pu" style="left:1288px;top:452px;line-height:16px">7,32</span><span class="pu" style="left:1347px;top:452px;line-height:16px">0,58</span>
<span class="bl" style="left:1229px;top:518px;line-height:16px">-12,87</span><span class="bl" style="left:1288px;top:518px;line-height:16px">7,33</span><span class="bl" style="left:1347px;top:518px;line-height:16px">0,59</span>
<span class="pu" style="left:1229px;top:532px;line-height:16px">-10,75</span><span class="pu" style="left:1288px;top:532px;line-height:16px">7,99</span><span class="pu" style="left:1347px;top:532px;line-height:16px">0,84</span>
<span class="bl" style="left:1229px;top:592px;line-height:16px">65</span><span class="bl" style="left:1288px;top:592px;line-height:16px">249</span><span class="bl" style="left:1347px;top:592px;line-height:16px">159</span>
<span class="pu" style="left:1229px;top:606px;line-height:16px">66</span><span class="pu" style="left:1288px;top:606px;line-height:16px">250</span><span class="pu" style="left:1347px;top:606px;line-height:16px">161</span>
<span class="gr" style="left:1229px;top:620px;line-height:16px">66</span><span class="gr" style="left:1288px;top:620px;line-height:16px">249</span><span class="gr" style="left:1347px;top:620px;line-height:16px">160</span>

<div style="left:1026px;top:420px;width:2px;height:238px;background:#f0f000"></div>
<div style="left:1020px;top:470px;width:13px;height:3.5px;background:#ffff00"></div>
<div style="left:1020px;top:549.5px;width:13px;height:3px;background:#ffff00"></div>
<div style="left:1020px;top:633px;width:14px;height:4px;background:#ffff00"></div>

<!-- RIGHT MAP -->
<div style="left:1417px;top:385px;width:450px;height:273px;background:#000;overflow:hidden;border-left:1px solid #c84000;border-top:1px solid #c84000">
<svg style="position:absolute;left:-8px;top:-1px" width="458" height="274" viewBox="0 0 1374 822" fill="none" stroke-linejoin="round">
<path stroke="#d0d0d0" stroke-width="160" d="M75,-50 L97.5,-25 Q120,0 175,65 Q230,130 285,190 Q340,250 395,310 Q450,370 500,440 Q550,510 585,580 Q620,650 635,722.5 Q650,795 662,860"/>
<path stroke="#4088ff" stroke-width="70" d="M75,-50 L97.5,-25 Q120,0 175,65 Q230,130 285,190 Q340,250 395,310 Q450,370 500,440 Q550,510 585,580 Q620,650 635,722.5 Q650,795 662,860"/>
<path stroke="#d0d0d0" stroke-width="160" d="M700,-110 Q950,-10 1190,8 Q1300,15 1500,-40"/>
<path stroke="#4088ff" stroke-width="60" d="M700,-110 Q950,-10 1190,8 Q1300,15 1500,-40"/>
<circle cx="651" cy="795" r="36" fill="#f00000" stroke="#ffb0b0" stroke-width="1"/>
</svg>
<span style="left:5px;top:4px;line-height:16px;font-size:12.5px;color:#7ab0ff">interlagos gp</span>
<span style="left:386px;top:2px;line-height:16px;font-size:12.5px;color:#7ab0ff">ABS 2022 Front</span>
<div style="left:414px;top:19px;width:60px;height:196px;border:1px solid #ddd"></div>
<span class="lg" style="left:410px;top:28px">96,95</span><span class="lg" style="left:410px;top:44px">87,26</span><span class="lg" style="left:410px;top:60px">77,56</span><span class="lg" style="left:410px;top:76px">67,87</span><span class="lg" style="left:410px;top:92px">58,17</span><span class="lg" style="left:410px;top:108px">48,48</span><span class="lg" style="left:410px;top:124px">38,78</span><span class="lg" style="left:410px;top:140px">29,09</span><span class="lg" style="left:410px;top:156px">19,39</span><span class="lg" style="left:410px;top:172px">9,70</span><span class="lg" style="left:410px;top:188px">-0,00</span>
</div>
</body></html>
